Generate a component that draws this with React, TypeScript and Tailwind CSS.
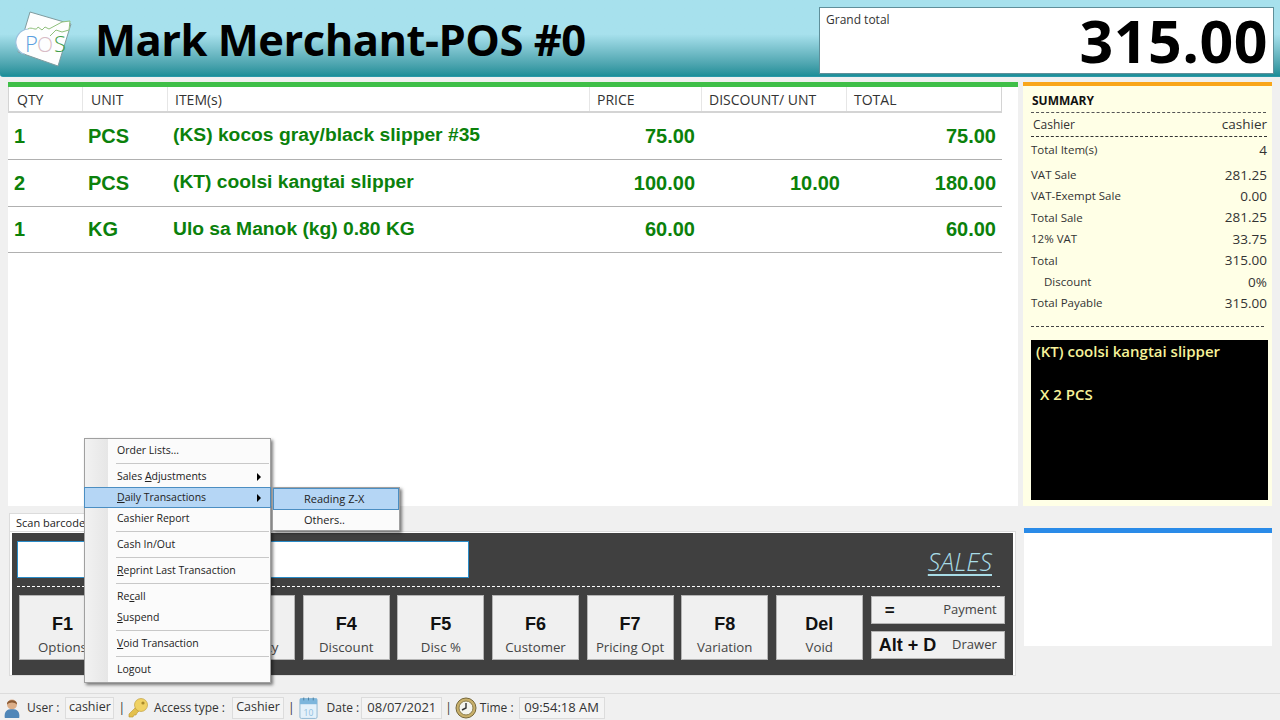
import type { ReactNode } from "react"

const ui = "font-['Open_Sans',sans-serif]"
const cols = "grid-cols-[74px_85px_422px_112px_145px_1fr]"

const items = [
  { qty: "1", unit: "PCS", name: "(KS) kocos gray/black slipper #35", price: "75.00", disc: "", total: "75.00" },
  { qty: "2", unit: "PCS", name: "(KT) coolsi kangtai slipper", price: "100.00", disc: "10.00", total: "180.00" },
  { qty: "1", unit: "KG", name: "Ulo sa Manok (kg) 0.80 KG", price: "60.00", disc: "", total: "60.00" },
]

const summary = [
  { label: "VAT Sale", value: "281.25" },
  { label: "VAT-Exempt Sale", value: "0.00" },
  { label: "Total Sale", value: "281.25" },
  { label: "12% VAT", value: "33.75" },
  { label: "Total", value: "315.00" },
  { label: "Discount", value: "0%", indent: true },
  { label: "Total Payable", value: "315.00" },
]

// F2 and the F3 key sit fully behind the open menu
const fkeys = [
  { key: "F1", label: "Options" },
  { key: "", label: "" },
  { key: "", label: "Quantity" },
  { key: "F4", label: "Discount" },
  { key: "F5", label: "Disc %" },
  { key: "F6", label: "Customer" },
  { key: "F7", label: "Pricing Opt" },
  { key: "F8", label: "Variation" },
  { key: "Del", label: "Void" },
]

function Logo() {
  return (
    <svg width="60" height="60" viewBox="0 0 60 60" className="shrink-0">
      <path d="M18 4 L59 16 L46 58 L6 44 Z" fill="#fdfefe" stroke="#7f9c9f" strokeWidth="1" strokeLinejoin="round" />
      <path d="M16 21 C20 18 24 24 26 19 L30 22 L33 19 L37 21 L50 14 L58 13 L57 22 L50 24 L44 22 L38 28" fill="#fdfefe" stroke="#8fc07c" strokeWidth="1" />
      <path d="M16 21 C7 22 3 30 4 36 C5 42 9 46 13 46" fill="#fdfefe" stroke="#9cc2de" strokeWidth="1.2" />
      <text x="13" y="44" fontFamily="Open Sans, sans-serif" fontWeight="300" fontSize="22" fill="#5a9fe0">P</text>
      <text x="25" y="44" fontFamily="Open Sans, sans-serif" fontWeight="300" fontSize="21" fill="#d8bcc6">O</text>
      <text x="42" y="44" fontFamily="Open Sans, sans-serif" fontWeight="300" fontSize="22" fill="#3f9f4a">S</text>
    </svg>
  )
}

function UserIcon() {
  return (
    <svg width="18" height="24" viewBox="0 0 20 24">
      <path d="M2 23 C1 16 4 13 10 13 C16 13 19 16 18 23 Z" fill="#4f86b8" />
      <circle cx="10" cy="8" r="5.5" fill="#dcae88" />
      <path d="M4.5 8 C4 2 16 2 15.5 8 C13 5 7 5 4.5 8 Z" fill="#8a5a34" />
    </svg>
  )
}

function KeyIcon() {
  return (
    <svg width="22" height="22" viewBox="0 0 22 22">
      <path d="M9 10 L2 17 L2 20 L6 20 L7 18 L9 18 L10 16 L12 14 Z" fill="#e3c04d" stroke="#b89530" strokeWidth="0.6" />
      <circle cx="14" cy="8" r="6.5" fill="#f0d264" stroke="#b89530" strokeWidth="0.6" />
      <circle cx="16" cy="6" r="1.6" fill="#a88a2c" />
    </svg>
  )
}

function CalendarIcon() {
  return (
    <svg width="19" height="24" viewBox="0 0 20 24">
      <rect x="1" y="2" width="18" height="21" rx="1.5" fill="#e4f1fa" stroke="#8fb6d2" />
      <rect x="1" y="2" width="18" height="6" fill="#7db6dc" />
      <path d="M5 1 V4 M10 1 V4 M15 1 V4" stroke="#4d7f9f" strokeWidth="1" />
      <text x="10" y="20" textAnchor="middle" fontSize="9" fontFamily="Open Sans, sans-serif" fill="#8fc0e0">10</text>
    </svg>
  )
}

function ClockIcon() {
  return (
    <svg width="22" height="22" viewBox="0 0 22 22">
      <circle cx="11" cy="11" r="10" fill="#c9b06a" stroke="#76683a" />
      <circle cx="11" cy="11" r="7" fill="#f4f4ee" stroke="#8b7c4a" />
      <path d="M11 6 V11 L7 13" fill="none" stroke="#333" strokeWidth="1.4" />
    </svg>
  )
}

function Field({ width, children }: { width: string; children: ReactNode }) {
  return <span className={`h-[22px] flex items-center justify-center border border-[#dcdcdc] bg-[#f4f4f4] ${width}`}>{children}</span>
}

function MenuItem({ label, active, arrow }: { label: ReactNode; active?: boolean; arrow?: boolean }) {
  return (
    <div className={`h-[21px] -mx-px flex items-center pl-[32px] pr-[9px] justify-between border ${active ? "bg-[#b5d6f5] border-[#4b8ec2]" : "border-transparent"}`}>
      <span>{label}</span>
      {arrow && <span className="w-0 h-0 border-y-[4px] border-y-transparent border-l-[4px] border-l-black" />}
    </div>
  )
}

function MenuSep() {
  return <div className="h-[5px] ml-[31px] mr-px flex items-center"><div className="h-px w-full bg-[#c8c8c8]" /></div>
}

function SalesMenu() {
  return (
    <>
      <div className={`absolute left-[84px] top-[438px] w-[187px] h-[245px] bg-[#fbfbfb] border border-[#a0a0a0] shadow-[2px_2px_3px_rgba(0,0,0,0.5)] text-[10.5px] text-[#222] ${ui}`}>
        <div className="absolute left-0 top-0 bottom-0 w-[23px] bg-gradient-to-r from-[#f2f2f2] to-[#e6e6e6]" />
        <div className="relative pt-px">
          <MenuItem label="Order Lists..." />
          <MenuSep />
          <MenuItem label={<>Sales <u>A</u>djustments</>} arrow />
          <MenuItem label={<><u>D</u>aily Transactions</>} active arrow />
          <MenuItem label="Cashier Report" />
          <MenuSep />
          <MenuItem label="Cash In/Out" />
          <MenuSep />
          <MenuItem label={<><u>R</u>eprint Last Transaction</>} />
          <MenuSep />
          <MenuItem label={<>Re<u>c</u>all</>} />
          <MenuItem label={<><u>S</u>uspend</>} />
          <MenuSep />
          <MenuItem label={<><u>V</u>oid Transaction</>} />
          <MenuSep />
          <MenuItem label="Logout" />
        </div>
      </div>
      <div className={`absolute left-[272px] top-[487px] w-[128px] h-[44px] bg-[#fbfbfb] border border-[#a0a0a0] shadow-[2px_2px_3px_rgba(0,0,0,0.5)] text-[11px] text-[#222] ${ui}`}>
        <div className="h-[22px] flex items-center pl-[30px] bg-[#b5d6f5] border border-[#4b8ec2]">Reading Z-X</div>
        <div className="h-[21px] flex items-center pl-[31px]">Others..</div>
      </div>
    </>
  )
}

export default function App() {
  return (
    <div className={`relative w-[1280px] h-[720px] overflow-hidden flex flex-col bg-[#f0f0f0] ${ui}`}>
      {/* header */}
      <header className="h-[77px] shrink-0 flex items-center pl-[12px] pr-[6px] rounded-bl-[3px] bg-gradient-to-b from-[#a7e1ed] from-45% to-[#1b8e98] border-b border-[#2a98a8]">
        <Logo />
        <h1 className="ml-[23px] mt-[4px] text-[43.5px] font-bold text-black leading-none tracking-[-0.5px] flex-1 whitespace-nowrap">Mark Merchant-POS #0</h1>
        <div className="w-[455px] h-[67px] mt-[4px] bg-white border border-[#5f8f9a] flex justify-between pl-[6px] pr-[5px]">
          <span className="text-[12px] text-[#333] mt-[3px]">Grand total</span>
          <span className="text-[59px] font-bold text-black leading-[65px] h-[65px] tracking-[0.5px]">315.00</span>
        </div>
      </header>

      {/* table and summary */}
      <div className="flex h-[424px] mt-[5px] ml-[8px] shrink-0">
        <div className="w-[1010px] bg-white border-t-[5px] border-[#3fbf48]">
          <div className={`w-[994px] h-[26px] grid ${cols} border-b-2 border-r border-[#d4d4d4] text-[14px] text-[#333]`}>
            {["QTY", "UNIT", "ITEM(s)", "PRICE", "DISCOUNT/ UNT", "TOTAL"].map((h, i) => (
              <div key={h} className={`flex items-center pt-px border-l ${i === 0 ? "border-l-[#d4d4d4]" : "border-l-[#e6e6e6]"} ${i < 2 ? "pl-[8px]" : "pl-[7px]"}`}>{h}</div>
            ))}
          </div>
          {items.map((row, i) => (
            <div key={i} className={`w-[994px] h-[46.8px] grid ${cols} border-b border-[#b0b0b0] items-center text-[20px] font-bold text-[#0b810b] font-['Liberation_Sans',sans-serif]`}>
              <div className="pl-[6px]">{row.qty}</div>
              <div className="pl-[6px]">{row.unit}</div>
              <div className="pl-[6px] text-[19.25px]">{row.name}</div>
              <div className="text-right pr-[6px]">{row.price}</div>
              <div className="text-right pr-[6px]">{row.disc}</div>
              <div className="text-right pr-[6px]">{row.total}</div>
            </div>
          ))}
        </div>

        <div className="ml-[5px] w-[249px] bg-[#ffffe6] border-t-[4px] border-[#f9a61a] pl-[8px] pr-[5px] text-[#333]">
          <div className="h-[23px] mt-[4px] pl-px flex items-center text-[12px] font-bold text-[#111] border-b border-dashed border-[#555] mr-px">SUMMARY</div>
          <div className="h-[24px] flex items-center justify-between border-b border-dashed border-[#333] text-[12px]">
            <span className="ml-[2px]">Cashier</span>
            <span className="text-[13.5px]">cashier</span>
          </div>
          <div className="h-[26px] flex items-center justify-between text-[11.5px]">
            <span>Total Item(s)</span>
            <span className="text-[13.5px]">4</span>
          </div>
          <div className="pt-px pb-[6px]">
            {summary.map((s) => (
              <div key={s.label} className="h-[21.4px] flex items-center justify-between text-[11.5px]">
                <span className={s.indent ? "ml-[13px]" : ""}>{s.label}</span>
                <span className="text-[13.5px]">{s.value}</span>
              </div>
            ))}
          </div>
          <div className="mt-[6px] mr-[3px] border-t border-dashed border-[#444]" />
          <div className="mt-[13px] h-[160px] bg-black text-[#f6f29a] font-semibold text-[15px] pl-[5px] w-[237px]">
            <div>(KT) coolsi kangtai slipper</div>
            <div className="mt-[21px] ml-[4px]">X 2 PCS</div>
          </div>
        </div>
      </div>

      {/* lower area */}
      <div className="flex ml-[9px] mt-[7px] shrink-0">
        <div className="w-[1007px]">
          <div className="w-[82px] h-[19px] bg-white border border-b-0 border-[#dcdcdc] text-[11px] text-[#222] pl-[6px] flex items-center">Scan barcode</div>
          <div className="h-[145px] bg-white border border-[#dcdcdc] px-[2px] pb-[2px] -mt-px pt-px">
            <div className="h-[142px] bg-[#404040] px-[5px] pt-[8px]">
              <div className="flex items-end justify-between">
                <div className="w-[452px] h-[37px] bg-white border border-[#2a8cc8]" />
                <span className="text-[25px] italic font-light text-[#a8dce6] underline decoration-[1.5px] underline-offset-[3px] mr-[16px] leading-[34px]">SALES</span>
              </div>
              <div className="mt-[8px] mr-[8px] border-t border-dashed border-white" />
              <div className="flex mt-[8px] ml-[2px]">
                <div className="flex gap-[7.6px]">
                  {fkeys.map((f, i) => (
                    <div key={i} className="w-[87px] h-[65px] bg-[#f0f0f0] border border-[#b4b4b4] flex flex-col items-center pt-[16px]">
                      <span className="h-[24px] text-[18px] font-bold text-[#111] leading-[24px] font-['Liberation_Sans',sans-serif]">{f.key}</span>
                      <span className="text-[13.25px] text-[#444] leading-[20px] mt-px">{f.label}</span>
                    </div>
                  ))}
                </div>
                <div className="ml-[8px] w-[134px] flex flex-col gap-[7px] pt-px">
                  <div className="h-[28px] bg-[#f0f0f0] border border-[#b4b4b4] flex items-center justify-between pl-[13px] pr-[7px]">
                    <span className="text-[17px] font-bold text-[#111] font-['Liberation_Sans',sans-serif] pt-px">=</span>
                    <span className="text-[13px] text-[#444]">Payment</span>
                  </div>
                  <div className="h-[28px] bg-[#f0f0f0] border border-[#b4b4b4] flex items-center justify-between pl-[7px] pr-[7px]">
                    <span className="text-[18px] font-bold text-[#111] font-['Liberation_Sans',sans-serif] pt-px">Alt + D</span>
                    <span className="text-[13px] text-[#444]">Drawer</span>
                  </div>
                </div>
              </div>
            </div>
          </div>
        </div>
        <div className="ml-[8px] mt-[15px] w-[248px] h-[118px] bg-white border-t-[5px] border-[#2a8be8]" />
      </div>

      {/* status bar */}
      <footer className="mt-auto h-[27px] shrink-0 border-t border-[#dcdcdc] flex items-center pl-[3px] pt-px text-[12px] text-[#333] whitespace-nowrap">
        <UserIcon />
        <span className="ml-[6px] mr-[6px]">User :</span>
        <Field width="w-[49px]"><span className="text-[12.5px]">cashier</span></Field>
        <span className="ml-[4px] mr-[2px]">|</span>
        <KeyIcon />
        <span className="ml-[5px] mr-[7px]">Access type :</span>
        <Field width="w-[52px]"><span className="text-[12.5px]">Cashier</span></Field>
        <span className="ml-[4px] mr-[4px]">|</span>
        <CalendarIcon />
        <span className="ml-[9px] mr-[2px]">Date :</span>
        <Field width="w-[81px]"><span className="text-[13px]">08/07/2021</span></Field>
        <span className="ml-[3px] mr-[3px]">|</span>
        <ClockIcon />
        <span className="ml-[3px] mr-[5px]">Time :</span>
        <Field width="w-[86px]"><span className="text-[13px]">09:54:18 AM</span></Field>
      </footer>

      <SalesMenu />
    </div>
  )
}
